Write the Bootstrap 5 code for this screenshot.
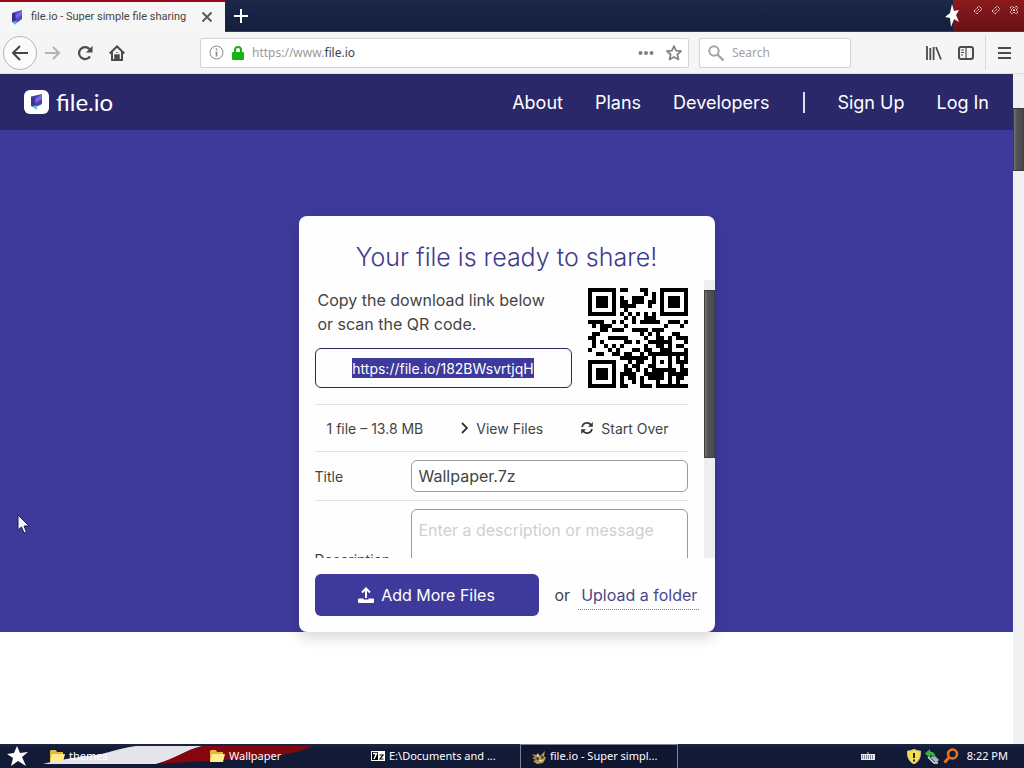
<!DOCTYPE html>
<html lang="en">
<head>
<meta charset="utf-8">
<meta name="viewport" content="width=device-width, initial-scale=1">
<title>file.io - Super simple file sharing</title>
<link href="https://cdn.jsdelivr.net/npm/bootstrap@5.3.0/dist/css/bootstrap.min.css" rel="stylesheet">
<style>
  :root { --ui: "Noto Sans", "Open Sans", sans-serif; --page: Inter, "Liberation Sans", sans-serif; --indigo: #3e3a9b; --indigo-dark: #2b286a; }
  body { font-family: var(--page); height: 100vh; color: #444; }
  svg { display: block; flex: none; }
  button { font-family: inherit; }
  .plain { border: 0; background: none; padding: 0; color: inherit; }

  /* browser chrome */
  .tabstrip { height: 32px; background: linear-gradient(#1b2848, #141e3d); font-family: var(--ui); border-bottom: 1px solid #333d58; }
  .tab-on { width: 225px; height: 32px; background: #f6f6f7; border-top: 2px solid #98061c; padding: 0 12px 0 9px; gap: 6px; font-size: 11px; font-family: Roboto, sans-serif; color: #444; }
  .star-spot { width: 16px; margin-right: -8px; z-index: 1; }
  .win-btns { width: 71px; height: 31px; background: linear-gradient(#8c1a1c, #671216); padding: 5px 5px 0 20px; }
  .toolbar-row { height: 42px; padding-left: 3px; padding-right: 13px; background: #f5f5f6; border-bottom: 1px solid #dcdcdc; font-family: var(--ui); color: #4b4b4d; }
  .back { width: 34px; height: 34px; border: 1px solid #b5b5b5; border-radius: 50%; background: #fbfbfb; }
  .field { height: 30px; border: 1px solid #d3d3d3; background: #fff; border-radius: 2px; }
  .field input { border: 0; outline: 0; background: none; font-size: 12px; color: #555; padding: 0; min-width: 0; }
  .field input::placeholder { color: #a3a3a3; }
  .urlbox { flex: 1 1 0; margin-left: 75px; padding: 0 6px 0 8px; }
  .url-text { font-size: 12px; color: #9a9a9a; }
  .url-text b { font-weight: 400; color: #444; }
  .searchbox { width: 152px; padding: 0 8px; margin-left: 10px; }
  .tools { padding-left: 75px; }
  .tool-sep { width: 1px; height: 34px; margin: 0 12px 0 11px; background: #d9d9d9; }

  /* scroll bars */
  .vbar { background: #f1f1f4; }
  .vbar i { display: block; background: linear-gradient(90deg, #777, #505253 30%, #484a4b); border: 1px solid #3c3e3e; }
  .page-bar { width: 11px; padding-top: 34px; }
  .page-bar i { height: 63px; }
  .card-bar { width: 11px; padding-top: 10px; background: #eceff0; }
  .card-bar i { height: 168px; }

  /* page */
  .site-nav { height: 56px; background: var(--indigo-dark); padding: 0 24px; }
  .site-nav a { color: #fff; text-decoration: none; font-size: 18px; }
  .site-nav .brand { font-family: Lato, sans-serif; font-size: 24px; gap: 7px; }
  .nav-rule { width: 2px; height: 21px; margin: 0 16px 0 34px; background: #dcdcf0; }
  .hero { background: var(--indigo); padding-top: 86px; height: 502px; }
  .share { width: 416px; height: 416px; background: #fefefe; border-radius: 8px; box-shadow: 0 6px 14px rgba(0,0,0,.16); }
  .share h1 { font-size: 25px; line-height: 32px; font-weight: 300; color: #3e3a8f; padding-top: 25px; height: 64px; }
  .scroller { height: 278px; overflow: hidden; }
  .inner { padding: 8px 16px 0; flex: 1 1 0; min-width: 0; }
  .lead-in { font-size: 16px; line-height: 24px; padding-left: 3px; height: 60px; }
  .link-box { height: 40px; border: 1px solid var(--indigo-dark); border-radius: 6px; width: 257px; font-size: 14px; }
  .link-box input { border: 0; outline: 0; width: 182px; height: 20px; padding: 0; background: var(--indigo); color: #fff; text-align: center; }
  .summary { margin-top: 16px; height: 48px; border-top: 1px solid #e4e4e6; border-bottom: 1px solid #e4e4e6; font-size: 14px; padding: 0 19px 0 12px; }
  .field-row { padding: 8px 0; border-bottom: 1px solid #e4e4e6; }
  .field-row label { width: 96px; font-size: 14px; }
  .field-row input, .field-row textarea { flex: 1 1 0; min-width: 0; border: 1px solid #9a9a9c; border-radius: 6px; font-size: 16px; line-height: 24px; color: #444; padding: 3px 7px; height: 32px; background: #fff; }
  .field-row textarea { height: 100px; padding-top: 8px; resize: none; }
  .field-row textarea::placeholder { color: #cfcfd1; }
  .add-btn { flex: none; width: 224px; height: 42px; border: 0; border-radius: 6px; background: var(--indigo); color: #fff; font-size: 16px; gap: 7px; }
  .share-foot { padding: 16px 16px 0; font-size: 16px; white-space: nowrap; }
  .share-foot a { color: #4a4788; text-decoration: none; border-bottom: 1px dotted #7472a8; padding: 4px 2px 4px 3px; line-height: 20px; }
  .pointer { position: absolute; left: 17px; top: 514px; }

  /* taskbar */
  .taskbar { height: 24px; background: linear-gradient(#1b2440, #131b39 20%, #101936); font-family: var(--ui); font-size: 11px; color: #fff; position: relative; }
  .ribbon { position: absolute; left: 0; top: 0; }
  .taskbar > :not(.ribbon) { position: relative; }
  .start { width: 40px; padding-left: 7px; }
  .task { width: 160px; height: 24px; padding: 0 0 0 9px; gap: 4px; white-space: nowrap; }
  .task-on { width: 158px; border: 1px solid #7b8297; border-bottom: 0; padding-left: 10px; background: #0f1630; }
</style>
</head>
<body class="d-flex flex-column overflow-hidden">

<header>
  <div class="tabstrip d-flex">
    <div class="tab-on d-flex align-items-center">
      <svg width="16" height="16" viewBox="0 0 16 16"><path d="M4 3.500L13 1v9l-4 3-3 2-3-2z" fill="#5348c8"/><path d="M3 4l3.500 1v8L3 12z" fill="#34308c"/><path d="M6.500 6L13 1.500V6L7 9z" fill="#7b68e8"/><path d="M4 12.500l4-.5-1.500 4z" fill="#4ac4d8"/></svg>
      <span class="flex-grow-1">file.io - Super simple file sharing</span>
      <button class="plain" aria-label="Close tab"><svg width="12" height="12" viewBox="0 0 12 12" stroke="#555" stroke-width="1.8"><path d="M1.500 1.500l9 9m0-9l-9 9"/></svg></button>
    </div>
    <button class="plain ms-2" aria-label="New tab"><svg width="16" height="16" viewBox="0 0 16 16" stroke="#fff" stroke-width="2"><path d="M8 1v14M1 8h14"/></svg></button>
    <div class="star-spot ms-auto pt-1"><svg width="16" height="24" viewBox="0 0 16 24"><path d="M7 0l2 7 5-1-3 5 3 7-5-3-3 8-1-9-5-1 5-4z" fill="#fff"/></svg></div>
    <div class="win-btns d-flex justify-content-between align-items-start">
      <svg width="10" height="10" viewBox="0 0 10 10" fill="none" stroke="#e6d6d6" stroke-dasharray="1.500 .6"><path d="M1 6l5-5 3 3-5 5zM3.500 6.500l3-3"/></svg>
      <svg width="10" height="10" viewBox="0 0 10 10" fill="none" stroke="#e6d6d6" stroke-dasharray="1.500 .6"><path d="M1 6l5-5 3 3-5 5zM3.500 6.500l3-3"/></svg>
      <svg width="10" height="10" viewBox="0 0 10 10" fill="none" stroke="#eee0e0" stroke-dasharray="1.500 .6"><path d="M1 3l2-2 2 2 2-2 2 2-2 2 2 2-2 2-2-2-2 2-2-2 2-2zM3.500 3.500l3 3m0-3l-3 3"/></svg>
    </div>
  </div>
  <div class="toolbar-row d-flex align-items-center">
    <button class="plain back d-flex align-items-center justify-content-center" aria-label="Back"><svg width="18" height="16" viewBox="0 0 18 16" fill="none" stroke="#444" stroke-width="2"><path d="M17 8H2m7-7L2 8l7 7"/></svg></button>
    <button class="plain ms-2" aria-label="Forward"><svg width="16" height="14" viewBox="0 0 16 14" fill="none" stroke="#b3b3b5" stroke-width="2"><path d="M0 7h14M8 1l6 6-6 6"/></svg></button>
    <button class="plain ms-3" aria-label="Reload"><svg width="16" height="16" viewBox="0 0 16 16" fill="none" stroke="#4b4b4d" stroke-width="2.200"><path d="M13 11.500A6 6 0 1 1 12.500 4"/><path d="M15.500 .8v6.700H9z" fill="#4b4b4d" stroke="none"/></svg></button>
    <button class="plain ms-3" aria-label="Home"><svg width="16" height="16" viewBox="0 0 16 16" fill="none" stroke="#4b4b4d" stroke-width="2"><path d="M.7 8.500L8 1.500l7.300 7M3 7v8h10V7"/><path d="M6 15v-5h4v5H6zm2-8v1" fill="#4b4b4d" stroke-width="1.500"/></svg></button>
    <div class="field urlbox d-flex align-items-center">
      <svg width="15" height="15" viewBox="0 0 15 15" fill="none" stroke="#8a8a8c"><circle cx="7.500" cy="7.500" r="6.500"/><path d="M7.500 6.500v5M7.500 3.500v1.700" stroke-width="1.700"/></svg>
      <svg class="ms-2 me-2" width="12" height="14" viewBox="0 0 12 14"><path d="M3 7V4a3 3 0 0 1 6 0v3" fill="none" stroke="#14b414" stroke-width="2"/><rect y="6" width="12" height="8" rx="1" fill="#14b414"/></svg>
      <span class="url-text flex-grow-1">https://www.<b>file.io</b></span>
      <svg width="16" height="6" viewBox="0 0 16 6" fill="#808082"><circle cx="2.500" cy="3" r="2"/><circle cx="8" cy="3" r="2"/><circle cx="13.500" cy="3" r="2"/></svg>
      <svg class="ms-2 ps-1" width="20" height="16" viewBox="0 0 16 16" fill="none" stroke="#808082" stroke-width="1.700" stroke-linejoin="round"><path d="M8 1l2.100 4.600 5 .5-3.800 3.400 1.200 5L8 12l-4.500 2.500 1.200-5L.9 6.100l5-.5z"/></svg>
    </div>
    <div class="field searchbox d-flex align-items-center">
      <svg width="16" height="16" viewBox="0 0 16 16" fill="none" stroke="#a5a5a7" stroke-width="2"><circle cx="6" cy="6" r="4.700"/><path d="M9.500 9.500l6 6" stroke-width="2.400"/></svg>
      <input class="w-100 ms-2" type="text" placeholder="Search" aria-label="Search">
    </div>
    <div class="tools d-flex align-items-center">
      <button class="plain me-3" aria-label="Library"><svg width="16" height="14" viewBox="0 0 16 14" stroke="#4b4b4d" stroke-width="1.800"><path d="M1 0v14M4.300 2v12M7.600 1v13M10 1l5 12.500"/></svg></button>
      <button class="plain" aria-label="Sidebars"><svg width="16" height="14" viewBox="0 0 16 14" fill="none" stroke="#4b4b4d" stroke-width="2"><rect x="1" y="1" width="14" height="12" rx="2"/><path d="M8 1v12M3 4h3M3 6.500h3M3 9h2" stroke-width="1.200"/></svg></button>
      <span class="tool-sep"></span>
      <button class="plain" aria-label="Menu"><svg width="13" height="12" viewBox="0 0 13 12" stroke="#4b4b4d" stroke-width="1.800"><path d="M0 1h13M0 6h13M0 11h13"/></svg></button>
    </div>
  </div>
</header>

<main class="d-flex flex-grow-1 overflow-hidden bg-white">
  <div class="flex-grow-1 overflow-hidden">
    <nav class="site-nav d-flex align-items-center">
      <a class="brand d-flex align-items-center me-auto" href="#">
        <svg width="25" height="24" viewBox="0 0 25 24"><rect width="25" height="24" rx="6" fill="#fff"/><path d="M7 6.500L18 4v10l-5 2.500-1.500 2L7 16z" fill="#4840ac"/><path d="M7 7l4.500 1.500v8L7 15z" fill="#3b3590"/><path d="M11 9l7-5v5l-6.500 4z" fill="#7b68e8"/><path d="M8 16l5-.5V20z" fill="#58cdbb"/></svg>
        <span>file.io</span>
      </a>
      <a href="#">About</a><a class="ms-3 ps-3" href="#">Plans</a><a class="ms-3 ps-3" href="#">Developers</a>
      <span class="nav-rule"></span>
      <a class="ps-3" href="#">Sign Up</a><a class="ms-3 ps-3" href="#">Log In</a>
    </nav>
    <section class="hero">
      <div class="share mx-auto">
        <h1 class="text-center m-0">Your file is ready to share!</h1>
        <div class="scroller d-flex">
          <div class="inner">
            <div class="d-flex justify-content-between">
              <div>
                <label class="lead-in d-block" for="dl">Copy the download link below<br>or scan the QR code.</label>
                <div class="link-box d-flex align-items-center justify-content-center"><input id="dl" type="text" value="https://file.io/182BWsvrtjqH" readonly></div>
              </div>
              <svg id="qr" width="100" height="100" viewBox="0 0 25 25" shape-rendering="crispEdges" role="img" aria-label="QR code"><path fill="#000"/></svg>
            </div>
            <div class="summary d-flex align-items-center justify-content-between">
              <span>1 file – 13.8 MB</span>
              <button class="plain d-flex align-items-center gap-2"><svg width="7" height="12" viewBox="0 0 7 12" fill="none" stroke="#333" stroke-width="1.800"><path d="M1 1l5 5-5 5"/></svg>View Files</button>
              <button class="plain d-flex align-items-center gap-2"><svg width="12" height="12" viewBox="0 0 12 12" fill="none" stroke="#333" stroke-width="1.600"><path d="M1 5a5 5 0 0 1 9-2M11 7a5 5 0 0 1-9 2"/><path d="M11.800 0v4.800H7zM.2 12V7.200H5z" fill="#333" stroke="none"/></svg>Start Over</button>
            </div>
            <div class="field-row d-flex align-items-center"><label for="ti">Title</label><input id="ti" type="text" value="Wallpaper.7z"></div>
            <div class="field-row d-flex align-items-center"><label for="de">Description</label><textarea id="de" placeholder="Enter a description or message"></textarea></div>
          </div>
          <div class="vbar card-bar"><i></i></div>
        </div>
        <div class="share-foot d-flex align-items-center">
          <button class="add-btn d-flex align-items-center justify-content-center"><svg width="16" height="16" viewBox="0 0 16 16" fill="none" stroke="#fff" stroke-width="2"><path d="M8 11V1.500M4 5.500l4-4 4 4"/><path d="M1 11.500h4.500v1h5v-1H15a1 1 0 0 1 1 1V15a1 1 0 0 1-1 1H1a1 1 0 0 1-1-1v-2.500a1 1 0 0 1 1-1z" fill="#fff" stroke="none"/></svg>Add More Files</button>
          <span class="ms-3 me-2">or</span><a href="#">Upload a folder</a>
        </div>
      </div>
    </section>
  </div>
  <div class="vbar page-bar"><i></i></div>
</main>

<footer class="taskbar d-flex align-items-center">
  <svg class="ribbon" width="340" height="24" viewBox="0 0 340 24"><path d="M43 20C60 16 70 14 88 12 108 10 118 4 136 2h68C185 6 175 15 156 20z" fill="#e4e4ea"/><path d="M202 2h110C285 16 230 15 156 20 175 15 185 6 202 2z" fill="#84060e"/></svg>
  <button class="plain start" aria-label="Start"><svg width="21" height="21" viewBox="0 0 21 21"><path d="M10 0l3 7 8-1-6 5 4 9-8-5-7 5 2-8-6-4 7-1z" fill="#fff"/></svg></button>
  <button class="plain task d-flex align-items-center"><svg width="16" height="14" viewBox="0 0 16 14"><path d="M1 2l1-1h5l1 2h6v10H2L1 12z" fill="#e0b93c"/><path d="M1 13l2-8h13l-2 8z" fill="#ffec8c"/></svg>themes</button>
  <button class="plain task d-flex align-items-center"><svg width="16" height="14" viewBox="0 0 16 14"><path d="M1 2l1-1h5l1 2h6v10H2L1 12z" fill="#e0b93c"/><path d="M1 13l2-8h13l-2 8z" fill="#ffec8c"/></svg>Wallpaper</button>
  <button class="plain task d-flex align-items-center"><svg width="16" height="10" viewBox="-2 0 16 10"><rect x=".5" y=".5" width="13" height="9" stroke="#fff"/><path d="M7 0h7v10H7z" fill="#fff"/><path d="M2 2.500h3.500L3 8" fill="none" stroke="#fff" stroke-width="1.500"/><path d="M8.500 4H12L9 8h3.500" fill="none" stroke="#000" stroke-width="1.200"/></svg>E:\Documents and ...</button>
  <button class="plain task task-on d-flex align-items-center"><svg width="15" height="14" viewBox="0 0 15 14"><path d="M1 4l4 1 2-2 2 3 5-5-1 5 2 2-3 5-6 1-4-3 3-1-4-2 3-1z" fill="#b69a50"/><path d="M4 7l4 1-1 3zM10 5l3 2-2 3z" fill="#3c3520"/><path d="M6 5l2 1M8 11l4-1" stroke="#fff3bd"/></svg>file.io - Super simpl...</button>
  <div class="d-flex align-items-center ms-auto me-3">
    <svg width="14" height="8" viewBox="0 0 14 8"><path d="M0 2h14v6H0z" fill="#e8e8ea"/><path d="M1 4h12M1 6h12" stroke="#222b45" stroke-dasharray="1 1"/><path d="M7 2V0" stroke="#ccc"/></svg>
    <svg class="ms-4 ps-2" width="22" height="15" viewBox="0 0 14 15" preserveAspectRatio="xMaxYMid"><path d="M7 0c2 1.500 4 2 6.500 2C14 9 11 13 7 15 3 13 0 9 .5 2 3 2 5 1.500 7 0z" fill="#f5e04a" stroke="#c9c9a0"/><path d="M7 4v5M7 10.500v2" stroke="#222" stroke-width="2"/></svg>
    <svg class="ms-1" width="14" height="15" viewBox="0 0 14 15"><path d="M5 8l6 6 3-3-4-4z" fill="#aab3b8"/><path d="M0 4.500L5 0v2.500c4 0 6 3 5 6.500-1-2-2-2.500-5-2.500V9z" fill="#35b53d"/><path d="M3 8l6 6h4" fill="none" stroke="#dce3e6" stroke-width="1.500"/></svg>
    <svg class="ms-1" width="16" height="16" viewBox="0 0 16 16" fill="none" stroke="#e8731c"><circle cx="9.500" cy="6" r="4.500" stroke-width="2.600"/><path d="M6 9.500l-4.500 5" stroke-width="3"/></svg>
    <span class="ms-2">8:22 PM</span>
  </div>
</footer>

<svg class="pointer" width="13" height="20" viewBox="0 0 13 20"><path d="M1 1v15l3.500-3 2.500 6 2.500-1L7 12h5z" fill="#f4f4ff" stroke="#1c1a50"/></svg>

<script src="https://cdn.jsdelivr.net/npm/bootstrap@5.3.0/dist/js/bootstrap.bundle.min.js"></script>
<script>
// QR code, version 2, level L, byte mode
(function () {
  const N = 25, text = document.getElementById('dl').value;
  const bits = [];
  const put = (v, n) => { while (n--) bits.push(v >> n & 1); };
  put(4, 4); put(text.length, 8);
  for (const c of text) put(c.charCodeAt(0), 8);
  put(0, 4);
  while (bits.length % 8) bits.push(0);
  const data = [];
  for (let i = 0; i < bits.length; i += 8) data.push(parseInt(bits.slice(i, i + 8).join(''), 2));
  for (let p = 0xEC; data.length < 34; p ^= 0xEC ^ 0x11) data.push(p);
  const mul = (a, b) => { let r = 0; for (let i = 7; i >= 0; i--) { r = (r << 1) ^ ((r >> 7) * 0x11D); r ^= (b >> i & 1) * a; } return r; };
  const gen = new Array(10).fill(0); gen[9] = 1;
  for (let i = 0, root = 1; i < 10; i++, root = mul(root, 2))
    for (let j = 0; j < 10; j++) { gen[j] = mul(gen[j], root); if (j < 9) gen[j] ^= gen[j + 1]; }
  const ec = new Array(10).fill(0);
  for (const b of data) { const f = b ^ ec.shift(); ec.push(0); gen.forEach((g, i) => ec[i] ^= mul(g, f)); }
  const words = data.concat(ec);
  const masks = [(x, y) => (x + y) % 2, (x, y) => y % 2, x => x % 3, (x, y) => (x + y) % 3,
    (x, y) => ((x / 3 | 0) + (y / 2 | 0)) % 2, (x, y) => x * y % 2 + x * y % 3,
    (x, y) => (x * y % 2 + x * y % 3) % 2, (x, y) => ((x + y) % 2 + x * y % 3) % 2];
  function build(k) {
    const m = [...Array(N)].map(() => Array(N).fill(0)), fn = m.map(r => r.slice());
    const set = (x, y, v) => { if (x >= 0 && y >= 0 && x < N && y < N) { m[y][x] = v ? 1 : 0; fn[y][x] = 1; } };
    for (let i = 0; i < N; i++) { set(6, i, i % 2 === 0); set(i, 6, i % 2 === 0); }
    for (const [cx, cy] of [[3, 3], [N - 4, 3], [3, N - 4]])
      for (let dy = -4; dy <= 4; dy++) for (let dx = -4; dx <= 4; dx++) {
        const d = Math.max(Math.abs(dx), Math.abs(dy)); set(cx + dx, cy + dy, d !== 2 && d !== 4);
      }
    for (let dy = -2; dy <= 2; dy++) for (let dx = -2; dx <= 2; dx++) set(18 + dx, 18 + dy, Math.max(Math.abs(dx), Math.abs(dy)) !== 1);
    const f = 8 | k; let rem = f;
    for (let i = 0; i < 10; i++) rem = (rem << 1) ^ ((rem >> 9) * 0x537);
    const fmt = (f << 10 | rem) ^ 0x5412, bit = i => fmt >> i & 1;
    for (let i = 0; i < 6; i++) set(8, i, bit(i));
    set(8, 7, bit(6)); set(8, 8, bit(7)); set(7, 8, bit(8));
    for (let i = 9; i < 15; i++) set(14 - i, 8, bit(i));
    for (let i = 0; i < 8; i++) set(N - 1 - i, 8, bit(i));
    for (let i = 8; i < 15; i++) set(8, N - 15 + i, bit(i));
    set(8, N - 8, 1);
    let n = 0;
    for (let r = N - 1; r >= 1; r -= 2) {
      if (r === 6) r = 5;
      for (let v = 0; v < N; v++) for (let j = 0; j < 2; j++) {
        const x = r - j, y = ((r + 1) & 2) === 0 ? N - 1 - v : v;
        if (!fn[y][x]) { const b = n < words.length * 8 ? words[n >> 3] >> (7 - (n & 7)) & 1 : 0; m[y][x] = b ^ (masks[k](x, y) === 0 ? 1 : 0); n++; }
      }
    }
    return m;
  }
  function score(m) {
    let s = 0, dark = 0;
    const lines = m.map(r => r.join('')).concat(m.map((_, i) => m.map(r => r[i]).join('')));
    for (const l of lines) {
      for (const run of l.match(/0+|1+/g)) if (run.length > 4) s += run.length - 2;
      for (let i = 0; i + 11 <= N; i++) { const w = l.substr(i, 11); if (w === '10111010000' || w === '00001011101') s += 40; }
    }
    for (let y = 0; y < N; y++) for (let x = 0; x < N; x++) {
      dark += m[y][x];
      if (x && y && m[y][x] === m[y - 1][x] && m[y][x] === m[y][x - 1] && m[y][x] === m[y - 1][x - 1]) s += 3;
    }
    return s + Math.floor(Math.abs(dark * 20 / (N * N) - 10)) * 10;
  }
  let best = null;
  for (let k = 0; k < 8; k++) { const m = build(k), s = score(m); if (!best || s < best.s) best = { m, s }; }
  let d = '';
  best.m.forEach((r, y) => r.forEach((v, x) => { if (v) d += `M${x} ${y}h1v1h-1z`; }));
  document.querySelector('#qr path').setAttribute('d', d);
})();
</script>
</body>
</html>
